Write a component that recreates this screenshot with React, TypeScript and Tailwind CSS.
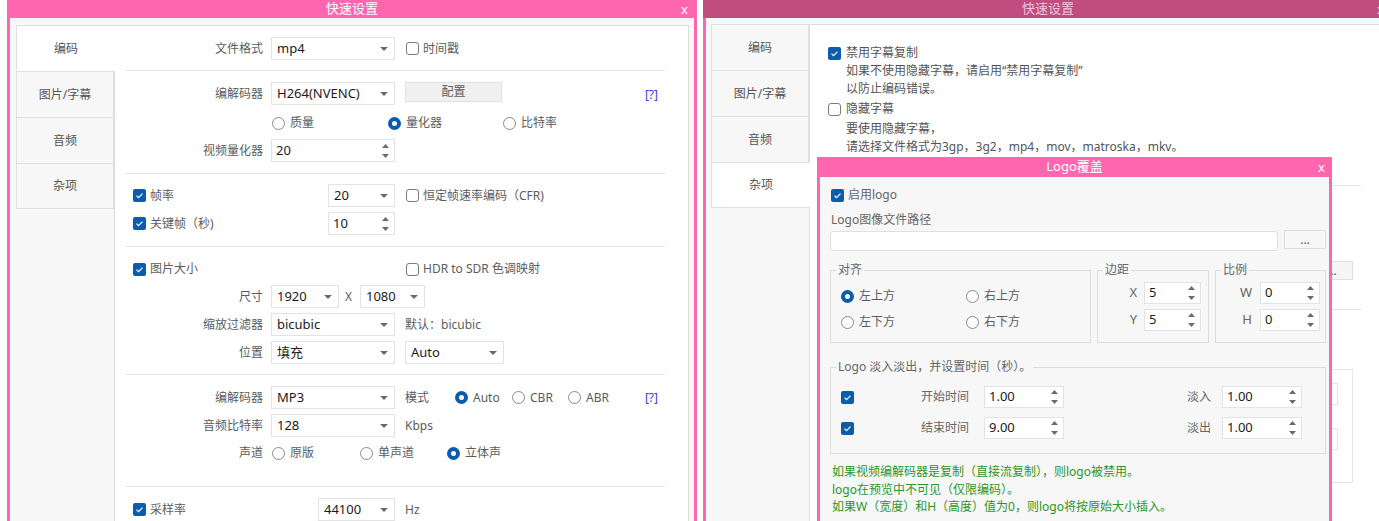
import React from "react";

function Arrow() {
  return (
    <svg width="8" height="4" viewBox="0 0 8 4" className="shrink-0">
      <path d="M0 0h8L4 4z" fill="#6b6b6b" />
    </svg>
  );
}

function SpinArrows() {
  return (
    <div className="flex flex-col gap-[6px] shrink-0">
      <svg width="7" height="4" viewBox="0 0 7 4">
        <path d="M0 4h7L3.5 0z" fill="#6b6b6b" />
      </svg>
      <svg width="7" height="4" viewBox="0 0 7 4">
        <path d="M0 0h7L3.5 4z" fill="#6b6b6b" />
      </svg>
    </div>
  );
}

function Sel({ v, cls = "w-[124px]" }: { v: string; cls?: string }) {
  return (
    <div className={`${cls} h-[23px] shrink-0 bg-white border border-[#e3e3e3] flex items-center justify-between pl-[5px] pr-[6px] text-[13px] text-[#1b1b1b]`}>
      <span>{v}</span>
      <Arrow />
    </div>
  );
}

function Spin({ v, cls = "w-[124px] h-[23px]" }: { v: string; cls?: string }) {
  return (
    <div className={`${cls} shrink-0 bg-white border border-[#e3e3e3] flex items-center justify-between pl-[4px] pr-[5px] text-[13px] text-[#1b1b1b]`}>
      <span>{v}</span>
      <SpinArrows />
    </div>
  );
}

function Check({ on }: { on?: boolean }) {
  return on ? (
    <span className="w-[13px] h-[13px] rounded-[2px] bg-[#0b5cad] flex items-center justify-center shrink-0">
      <svg width="9" height="7" viewBox="0 0 9 7">
        <path d="M1.5 3.6l2 2 4-4" stroke="#fff" strokeWidth="1.2" fill="none" />
      </svg>
    </span>
  ) : (
    <span className="w-[13px] h-[13px] rounded-[3px] border border-[#7a7a7a] bg-white shrink-0" />
  );
}

function Radio({ on }: { on?: boolean }) {
  return on ? (
    <span className="w-[13px] h-[13px] rounded-full border-[4px] border-[#0b5cad] bg-white shrink-0" />
  ) : (
    <span className="w-[13px] h-[13px] rounded-full border border-[#8a8a8a] bg-white shrink-0" />
  );
}

function CItem({ on, t, cls = "" }: { on?: boolean; t: string; cls?: string }) {
  return (
    <div className={`flex items-center gap-[4px] ${cls}`}>
      <Check on={on} />
      <span className="text-[#5c5c5c]">{t}</span>
    </div>
  );
}

function RItem({ on, t, cls = "" }: { on?: boolean; t: string; cls?: string }) {
  return (
    <div className={`flex items-center gap-[5px] ${cls}`}>
      <Radio on={on} />
      <span className="text-[#5c5c5c]">{t}</span>
    </div>
  );
}

function Row({ label, mt, children }: { label: string; mt: string; children: React.ReactNode }) {
  return (
    <div className={`flex items-center h-[23px] w-[540px] ${mt}`}>
      <span className="w-[138px] text-right text-[#5c5c5c]">{label}</span>
      <div className="ml-[8px] flex items-center flex-1">{children}</div>
    </div>
  );
}

function Tabs({ active }: { active: number }) {
  const names = ["编码", "图片/字幕", "音频", "杂项"];
  return (
    <div className="w-[98px] shrink-0 flex flex-col">
      {names.map((n, i) => (
        <div
          key={n}
          className={
            i === active
              ? `h-[46px] w-[99px] relative z-10 bg-white border-l border-t border-[#e0e0e0] flex items-center justify-center text-[#555] ${i === 3 ? "border-b" : ""}`
              : `h-[46px] w-[98px] bg-[#f7f7f7] border-l border-t border-r border-[#e0e0e0] flex items-center justify-center text-[#555] ${i === 3 ? "border-b" : ""}`
          }
        >
          {n}
        </div>
      ))}
    </div>
  );
}

function LeftWindow() {
  return (
    <div className="ml-[7px] w-[690px] h-[540px] shrink-0 bg-[#ff66b0] flex flex-col">
      <div className="h-[18px] flex items-center justify-center relative text-white text-[13px]">
        快速设置
        <span className="absolute right-[9px] top-0 leading-[18px]">x</span>
      </div>
      <div className="mx-[3px] flex-1 bg-[#f7f7f7] flex pt-[7px] pl-[6px] pr-[5px]">
        <Tabs active={0} />
        <div className="flex-1 bg-white border border-[#dcdcdc] pl-[10px] flex flex-col">
          <Row label="文件格式" mt="mt-[11px]">
            <Sel v="mp4" />
            <CItem t="时间戳" cls="ml-[11px]" />
          </Row>
          <div className="mt-[10px] h-px w-[540px] bg-[#e6e6e6]" />

          <Row label="编解码器" mt="mt-[11px]">
            <Sel v="H264(NVENC)" />
            <div className="ml-[10px] self-start w-[97px] h-[20px] bg-[#f0f0f0] border border-[#e0e0e0] flex items-center justify-center text-[#5c5c5c]">
              配置
            </div>
            <span className="ml-auto mr-[7px] mt-[3px] text-[#3c3cdc]">[?]</span>
          </Row>
          <div className="flex items-center h-[18px] mt-[9px] pl-[147px]">
            <RItem t="质量" cls="w-[116px]" />
            <RItem on t="量化器" cls="w-[115px]" />
            <RItem t="比特率" />
          </div>
          <Row label="视频量化器" mt="mt-[7px]">
            <Spin v="20" />
          </Row>
          <div className="mt-[11px] h-px w-[540px] bg-[#e6e6e6]" />

          <div className="flex items-center h-[23px] mt-[10px] pl-[8px]">
            <CItem on t="帧率" cls="w-[195px]" />
            <Sel v="20" cls="w-[67px]" />
            <CItem t="恒定帧速率编码（CFR)" cls="ml-[11px]" />
          </div>
          <div className="flex items-center h-[23px] mt-[5px] pl-[8px]">
            <CItem on t="关键帧（秒)" cls="w-[195px]" />
            <Spin v="10" cls="w-[67px] h-[23px]" />
          </div>
          <div className="mt-[11px] h-px w-[540px] bg-[#e6e6e6]" />

          <div className="flex items-center h-[18px] mt-[13px] pl-[8px]">
            <CItem on t="图片大小" cls="w-[273px]" />
            <CItem t="HDR to SDR 色调映射" />
          </div>
          <Row label="尺寸" mt="mt-[7px]">
            <Sel v="1920" cls="w-[68px]" />
            <span className="ml-[6px] w-[15px] text-[#5c5c5c]">X</span>
            <Sel v="1080" cls="w-[65px]" />
          </Row>
          <Row label="缩放过滤器" mt="mt-[5px]">
            <Sel v="bicubic" />
            <span className="ml-[10px] text-[#5c5c5c]">默认：bicubic</span>
          </Row>
          <Row label="位置" mt="mt-[5px]">
            <Sel v="填充" />
            <div className="ml-[10px]">
              <Sel v="Auto" cls="w-[99px]" />
            </div>
          </Row>
          <div className="mt-[10px] h-px w-[540px] bg-[#e6e6e6]" />

          <Row label="编解码器" mt="mt-[11px]">
            <Sel v="MP3" />
            <span className="ml-[10px] w-[50px] text-[#5c5c5c]">模式</span>
            <RItem on t="Auto" cls="w-[57px]" />
            <RItem t="CBR" cls="w-[56px]" />
            <RItem t="ABR" />
            <span className="ml-auto mr-[7px] text-[#3c3cdc]">[?]</span>
          </Row>
          <Row label="音频比特率" mt="mt-[5px]">
            <Sel v="128" />
            <span className="ml-[10px] text-[#5c5c5c]">Kbps</span>
          </Row>
          <div className="flex items-center h-[18px] mt-[7px] w-[540px]">
            <span className="w-[138px] text-right text-[#5c5c5c]">声道</span>
            <div className="ml-[9px] flex items-center">
              <RItem t="原版" cls="w-[88px]" />
              <RItem t="单声道" cls="w-[87px]" />
              <RItem on t="立体声" />
            </div>
          </div>
          <div className="mt-[24px] h-px w-[540px] bg-[#e6e6e6]" />

          <div className="flex items-center h-[23px] mt-[11px] pl-[8px]">
            <CItem on t="采样率" cls="w-[185px]" />
            <Sel v="44100" cls="w-[77px]" />
            <span className="ml-[10px] text-[#5c5c5c]">Hz</span>
          </div>
        </div>
      </div>
    </div>
  );
}

function RightWindow() {
  return (
    <div className="ml-[6px] w-[690px] h-[540px] shrink-0 bg-[#ff66b0] flex flex-col">
      <div className="h-[18px] bg-[#c04c80] flex items-center justify-center relative text-[#f3c4da] text-[13px]">
        快速设置
        <span className="absolute right-[9px] top-0 leading-[18px]">x</span>
      </div>
      <div className="mx-[3px] flex-1 bg-[#f7f7f7] flex pt-[6px] pl-[5px] pr-[5px]">
        <Tabs active={3} />
        <div className="flex-1 bg-white border border-[#dcdcdc] pl-[18px] flex flex-col text-[#555]">
          <div className="mt-[19px] h-[18px] flex items-center gap-[5px]">
            <Check on />
            <span>禁用字幕复制</span>
          </div>
          <div className="pl-[18px] leading-[17.5px]">
            <div>如果不使用隐藏字幕，请启用“禁用字幕复制”</div>
            <div>以防止编码错误。</div>
          </div>
          <div className="mt-[3px] h-[18px] flex items-center gap-[5px]">
            <Check />
            <span>隐藏字幕</span>
          </div>
          <div className="pl-[18px] mt-[2px] leading-[18px]">
            <div>要使用隐藏字幕，</div>
            <div>请选择文件格式为3gp，3g2，mp4，mov，matroska，mkv。</div>
          </div>
          <div className="mt-[29px] h-px w-[533px] bg-[#e6e6e6]" />
          <div className="mt-[75px] w-[525px] flex justify-end">
            <div className="w-[42px] h-[19px] bg-[#f5f5f5] border border-[#e0e0e0] flex items-center justify-center text-[#555] leading-none">
              ...
            </div>
          </div>
          <div className="mt-[29px] h-px w-[533px] bg-[#e6e6e6]" />
          <div className="mt-[59px] w-[525px] flex justify-end">
            <div className="w-[300px] h-[114px] border border-[#e6e6e6] flex flex-col items-end pr-[14px]">
              <div className="mt-[13px] w-[100px] h-[22px] border border-[#e3e3e3] bg-white" />
              <div className="mt-[23px] w-[100px] h-[22px] border border-[#e3e3e3] bg-white" />
            </div>
          </div>
        </div>
      </div>
    </div>
  );
}

function LogoDialog() {
  return (
    <div className="absolute left-[817px] top-[157px] w-[515px] h-[380px] bg-[#ff66b0] flex flex-col z-20">
      <div className="h-[20px] flex items-center justify-center relative text-white text-[13px]">
        Logo覆盖
        <span className="absolute right-[7px] top-0 leading-[20px]">x</span>
      </div>
      <div className="mx-[3px] flex-1 bg-[#f7f7f7] pl-[10px] pr-[3px] flex flex-col text-[#666]">
        <div className="mt-[9px] h-[18px] flex items-center gap-[4px] pl-[1px]">
          <Check on />
          <span>启用logo</span>
        </div>
        <div className="mt-[7px] h-[18px] flex items-center pl-[1px]">Logo图像文件路径</div>
        <div className="mt-[1px] flex items-start">
          <div className="mt-[1px] w-[448px] h-[20px] bg-white border border-[#e0e0e0] rounded-[3px]" />
          <div className="ml-[6px] w-[42px] h-[19px] bg-[#f7f7f7] border border-[#dedede] flex items-center justify-center leading-none text-[#555]">
            ...
          </div>
        </div>

        <div className="mt-[11px] flex gap-[6px]">
          <fieldset className="w-[261px] border border-[#dcdcdc] pl-[10px] pb-[11px]">
            <legend className="ml-[-5px] px-[2px] leading-[16px]">对齐</legend>
            <div className="mt-[9px] h-[18px] flex items-center">
              <RItem on t="左上方" cls="w-[125px]" />
              <RItem t="右上方" />
            </div>
            <div className="mt-[8px] h-[18px] flex items-center">
              <RItem t="左下方" cls="w-[125px]" />
              <RItem t="右下方" />
            </div>
          </fieldset>
          <fieldset className="w-[112px] border border-[#dcdcdc] pb-[11px]">
            <legend className="ml-[5px] px-[2px] leading-[16px]">边距</legend>
            <div className="mt-[4px] flex items-center">
              <span className="w-[39px] text-right text-[13px]">X</span>
              <Spin v="5" cls="ml-[7px] w-[57px] h-[22px]" />
            </div>
            <div className="mt-[5px] flex items-center">
              <span className="w-[39px] text-right text-[13px]">Y</span>
              <Spin v="5" cls="ml-[7px] w-[57px] h-[22px]" />
            </div>
          </fieldset>
          <fieldset className="w-[111px] border border-[#dcdcdc] pb-[11px]">
            <legend className="ml-[5px] px-[2px] leading-[16px]">比例</legend>
            <div className="mt-[4px] flex items-center">
              <span className="w-[36px] text-right text-[13px]">W</span>
              <Spin v="0" cls="ml-[8px] w-[60px] h-[22px]" />
            </div>
            <div className="mt-[5px] flex items-center">
              <span className="w-[36px] text-right text-[13px]">H</span>
              <Spin v="0" cls="ml-[8px] w-[60px] h-[22px]" />
            </div>
          </fieldset>
        </div>

        <fieldset className="mt-[16px] w-[496px] border border-[#dcdcdc] pl-[10px] pb-[14px]">
          <legend className="ml-[-5px] px-[2px] leading-[16px]">Logo 淡入淡出，并设置时间（秒）。</legend>
          <div className="mt-[11px] flex items-center">
            <Check on />
            <span className="ml-[67px] w-[48px]">开始时间</span>
            <Spin v="1.00" cls="ml-[15px] w-[80px] h-[22px]" />
            <span className="ml-[123px] w-[24px]">淡入</span>
            <Spin v="1.00" cls="ml-[11px] w-[80px] h-[22px]" />
          </div>
          <div className="mt-[9px] flex items-center">
            <Check on />
            <span className="ml-[67px] w-[48px]">结束时间</span>
            <Spin v="9.00" cls="ml-[15px] w-[80px] h-[22px]" />
            <span className="ml-[123px] w-[24px]">淡出</span>
            <Spin v="1.00" cls="ml-[11px] w-[80px] h-[22px]" />
          </div>
        </fieldset>

        <div className="mt-[9px] pl-[2px] leading-[17.5px] text-[#2a962a]">
          <div>如果视频编解码器是复制（直接流复制），则logo被禁用。</div>
          <div>logo在预览中不可见（仅限编码）。</div>
          <div>如果W（宽度）和H（高度）值为0，则logo将按原始大小插入。</div>
        </div>
      </div>
    </div>
  );
}

export default function App() {
  return (
    <div className="w-[1379px] h-[521px] overflow-hidden bg-white flex relative font-['Noto_Sans','Noto_Sans_CJK_SC',sans-serif] text-[12px]">
      <LeftWindow />
      <RightWindow />
      <LogoDialog />
    </div>
  );
}
